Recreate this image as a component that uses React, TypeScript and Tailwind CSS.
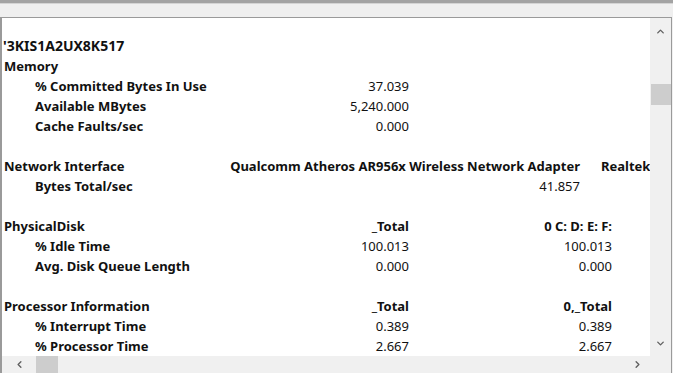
import { ChevronUp, ChevronDown, ChevronLeft, ChevronRight } from "lucide-react";

type Row =
  | { kind: "title"; text: string }
  | { kind: "object"; name: string; cols: string[]; widths?: number[] }
  | { kind: "counter"; name: string; cols: string[]; widths?: number[] }
  | { kind: "blank" };

const STD = [205, 203];
const NET = [376, 70];

const rows: Row[] = [
  { kind: "title", text: "'3KIS1A2UX8K517" },
  { kind: "object", name: "Memory", cols: [] },
  { kind: "counter", name: "% Committed Bytes In Use", cols: ["37.039"] },
  { kind: "counter", name: "Available MBytes", cols: ["5,240.000"] },
  { kind: "counter", name: "Cache Faults/sec", cols: ["0.000"] },
  { kind: "blank" },
  {
    kind: "object",
    name: "Network Interface",
    cols: ["Qualcomm Atheros AR956x Wireless Network Adapter", "Realtek PCIe FE Family Controller"],
    widths: NET,
  },
  { kind: "counter", name: "Bytes Total/sec", cols: ["41.857", ""], widths: NET },
  { kind: "blank" },
  { kind: "object", name: "PhysicalDisk", cols: ["_Total", "0 C: D: E: F:"] },
  { kind: "counter", name: "% Idle Time", cols: ["100.013", "100.013"] },
  { kind: "counter", name: "Avg. Disk Queue Length", cols: ["0.000", "0.000"] },
  { kind: "blank" },
  { kind: "object", name: "Processor Information", cols: ["_Total", "0,_Total"] },
  { kind: "counter", name: "% Interrupt Time", cols: ["0.389", "0.389"] },
  { kind: "counter", name: "% Processor Time", cols: ["2.667", "2.667"] },
];

function ReportRow({ row }: { row: Row }) {
  if (row.kind === "blank") return <div className="h-5" />;
  if (row.kind === "title")
    return (
      <div className="h-5 leading-5 font-bold whitespace-nowrap pl-[1px] text-[14px]">{row.text}</div>
    );
  const widths = row.widths ?? STD;
  const isObject = row.kind === "object";
  return (
    <div className="h-5 leading-5 flex whitespace-nowrap">
      <div className={`w-[202px] shrink-0 font-bold ${isObject ? "pl-[2px]" : "pl-[33px]"}`}>
        {row.name}
      </div>
      {row.cols.map((c, i) => (
        <div
          key={i}
          className={`shrink-0 ${i === 1 && row.widths ? "text-left pl-[21px]" : "text-right"} ${
            isObject ? "font-bold" : "font-normal"
          }`}
          style={{ width: widths[i] }}
        >
          {c}
        </div>
      ))}
    </div>
  );
}

export default function App() {
  return (
    <div className="w-[673px] h-[373px] bg-[#f0f0f0] flex flex-col overflow-hidden font-['Noto_Sans',sans-serif] text-[13px] text-[#111]">
      {/* window chrome strip */}
      <div className="h-[3px] bg-[#a3a3a3] shrink-0" />
      <div className="h-[14px] bg-[#efefef] border-t border-[#d4d4d4] shrink-0" />

      <div className="flex-1 flex flex-col border-t border-l-2 border-r border-[#9a9a9a] mr-[1px] min-h-0">
        <div className="flex-1 flex min-h-0">
          {/* report body */}
          <div className="flex-1 bg-white overflow-hidden pt-[18px]">
            {rows.map((r, i) => (
              <ReportRow key={i} row={r} />
            ))}
          </div>

          {/* vertical scrollbar */}
          <div className="w-[21px] bg-[#f0f0f0] flex flex-col items-center shrink-0">
            <div className="h-[22px] flex items-center justify-center mt-[2px]">
              <ChevronUp size={11} strokeWidth={3} className="text-[#606060]" />
            </div>
            <div className="mt-[42px] w-[20px] h-[21px] bg-[#cdcdcd]" />
            <div className="flex-1" />
            <div className="h-[22px] flex items-center justify-center mb-[2px]">
              <ChevronDown size={11} strokeWidth={3} className="text-[#606060]" />
            </div>
          </div>
        </div>

        {/* horizontal scrollbar */}
        <div className="h-[17px] bg-[#f0f0f0] flex items-center shrink-0">
          <div className="w-[34px] flex items-center justify-center">
            <ChevronLeft size={11} strokeWidth={3} className="text-[#606060]" />
          </div>
          <div className="w-[22px] h-full bg-[#cdcdcd]" />
          <div className="flex-1" />
          <div className="w-[26px] flex items-center justify-center">
            <ChevronRight size={11} strokeWidth={3} className="text-[#606060]" />
          </div>
          <div className="w-[21px]" />
        </div>
      </div>
    </div>
  );
}
